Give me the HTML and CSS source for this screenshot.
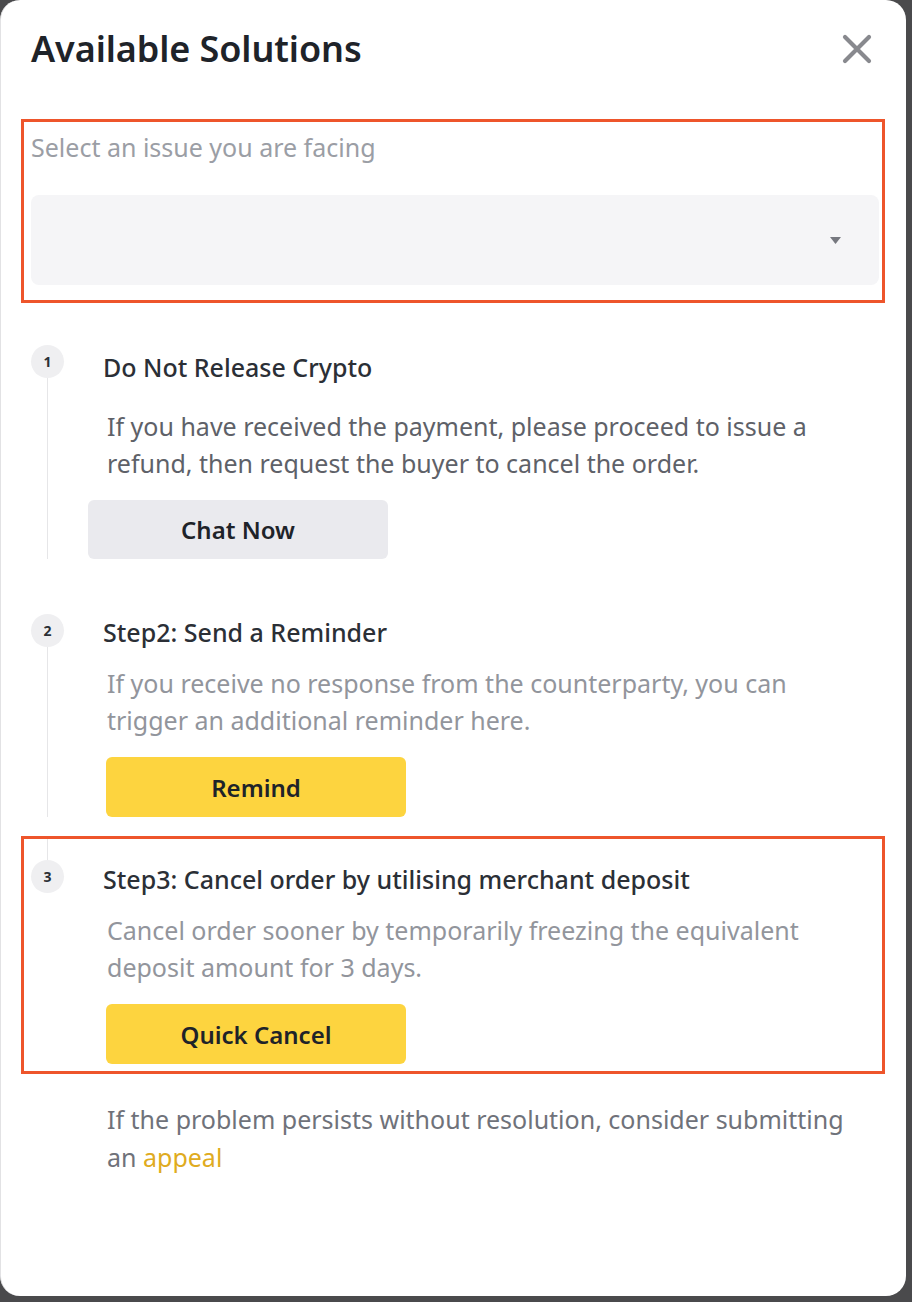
FILE: index.html
```html
<!DOCTYPE html>
<html lang="en">
<head>
    <meta charset="UTF-8">
    <meta name="viewport" content="width=device-width, initial-scale=1.0">
    <title>Available Solutions</title>
    <link rel="stylesheet" href="styles.css">
</head>
<body>

    <div class="modal">
        <div class="modal-header">
            <h1>Available Solutions</h1>
            <button class="close-btn" aria-label="Close">
                <svg width="30" height="30" viewBox="0 0 30 30">
                    <path d="M3 3 L27 27 M27 3 L3 27" stroke="#88898e" stroke-width="4.2" stroke-linecap="round"/>
                </svg>
            </button>
        </div>

        <div class="highlight issue-box">
            <p class="issue-label">Select an issue you are facing</p>
            <div class="select">
                <svg class="caret" width="11" height="7" viewBox="0 0 11 7">
                    <path d="M0 0 H11 L5.5 7 Z" fill="#76787f"/>
                </svg>
            </div>
        </div>

        <div class="steps">
            <div class="step step-first">
                <div class="step-marker">
                    <span class="step-num">1</span>
                    <span class="step-line"></span>
                </div>
                <div class="step-body">
                    <h3>Do Not Release Crypto</h3>
                    <p class="step-desc dark">If you have received the payment, please proceed to issue a refund, then request the buyer to cancel the order.</p>
                    <button class="btn btn-grey">Chat Now</button>
                </div>
            </div>

            <div class="step step-second">
                <div class="step-marker">
                    <span class="step-num">2</span>
                    <span class="step-line"></span>
                </div>
                <div class="step-body">
                    <h3>Step2: Send a Reminder</h3>
                    <p class="step-desc">If you receive no response from the counterparty, you can trigger an additional reminder here.</p>
                    <button class="btn btn-yellow">Remind</button>
                </div>
            </div>

            <div class="highlight">
                <div class="step step-last">
                    <div class="step-marker">
                        <span class="step-line step-line-top"></span>
                        <span class="step-num">3</span>
                    </div>
                    <div class="step-body">
                        <h3>Step3: Cancel order by utilising merchant deposit</h3>
                        <p class="step-desc">Cancel order sooner by temporarily freezing the equivalent deposit amount for 3 days.</p>
                        <button class="btn btn-yellow">Quick Cancel</button>
                    </div>
                </div>
            </div>
        </div>

        <p class="footer-note">If the problem persists without resolution, consider submitting an <a href="#">appeal</a></p>
    </div>

</body>
</html>
```

FILE: styles.css
```css
body {
    margin: 0;
    background-color: #4a4a4c;
    font-family: 'Noto Sans', 'Open Sans', Arial, sans-serif;
}
.modal {
    width: 906px;
    height: 1296px;
    background-color: #fff;
    border-radius: 20px;
    box-sizing: border-box;
    padding: 0 21px 0 20px;
    border-left: 1px solid #e2e2e4;
}
.modal-header {
    display: flex;
    justify-content: space-between;
    align-items: center;
    height: 119px;
    box-sizing: border-box;
    padding: 0 13px 22px 10px;
}
h1 {
    margin: 0;
    font-size: 36px;
    line-height: 44px;
    font-weight: 600;
    color: #1e2329;
    letter-spacing: -0.1px;
}
.close-btn {
    border: none;
    background: none;
    padding: 0;
    display: flex;
    cursor: pointer;
}
.highlight {
    border: 3px solid #ee552b;
}
.issue-box {
    padding: 10px 3px 15px 7px;
}
.issue-label {
    margin: 0;
    font-size: 25px;
    line-height: 30px;
    color: #9b9ea5;
}
.select {
    margin-top: 33px;
    height: 90px;
    background-color: #f5f5f7;
    border-radius: 8px;
    display: flex;
    align-items: center;
    justify-content: flex-end;
    padding-right: 38px;
}
.steps {
    margin-top: 42px;
}
.step {
    display: flex;
    padding-left: 10px;
}
.step-second {
    padding-bottom: 19px;
}
.step-first {
    padding-bottom: 55px;
}
.highlight .step {
    padding-left: 7px;
    padding-bottom: 7px;
}
.step-marker {
    width: 33px;
    flex-shrink: 0;
    display: flex;
    flex-direction: column;
    align-items: center;
    margin-right: 39px;
}
.step-num {
    width: 33px;
    height: 33px;
    border-radius: 50%;
    background-color: #efeff1;
    display: flex;
    align-items: center;
    justify-content: center;
    font-size: 14px;
    font-weight: 700;
    color: #2b2f36;
}
.step-line {
    flex: 1;
    width: 1.5px;
    background-color: #e6e6e8;
}
.step-line-top {
    flex: none;
    height: 21px;
}
.step-body {
    width: 756px;
}
.step-first .step-body {
    padding-top: 6px;
}
.step-second .step-body {
    padding-top: 2px;
}
.step-last .step-body {
    padding-top: 24px;
}
h3 {
    margin: 0;
    font-size: 25px;
    line-height: 32px;
    font-weight: 500;
    color: #2b2f36;
}
.step-desc {
    margin: 17px 0 0 4px;
    font-size: 25px;
    line-height: 37px;
    color: #92959c;
}
.step-desc.dark {
    margin-top: 25px;
    color: #5e6168;
}
.btn {
    display: block;
    margin-top: 18px;
    width: 300px;
    height: 60px;
    border: none;
    border-radius: 6px;
    font-family: inherit;
    font-size: 24px;
    font-weight: 600;
    color: #1e2329;
    cursor: pointer;
}
.btn-grey {
    background-color: #eaeaee;
    margin-left: -15px;
    height: 59px;
}
.btn-yellow {
    background-color: #fdd43f;
    margin-left: 3px;
}
.footer-note {
    width: 752px;
    margin: 26px 0 0 86px;
    font-size: 25px;
    line-height: 38px;
    color: #6f727a;
}
.footer-note a {
    color: #dfab20;
    text-decoration: none;
}
```
